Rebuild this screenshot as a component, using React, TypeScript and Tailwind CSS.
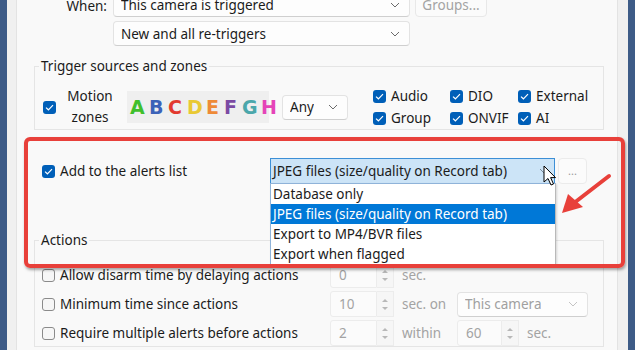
import React from "react";

const Check = ({ checked = false }: { checked?: boolean }) =>
  checked ? (
    <span className="flex h-[13px] w-[13px] shrink-0 items-center justify-center rounded-[3px] bg-[#005fb8]">
      <svg width="9" height="7" viewBox="0 0 9 7">
        <path d="M1 3.6 L3.4 5.8 L8 1.2" fill="none" stroke="white" strokeWidth="1.2" />
      </svg>
    </span>
  ) : (
    <span className="h-[13px] w-[13px] shrink-0 rounded-[3px] border border-[#8a8a8a] bg-[#f6f6f6]" />
  );

const Chevron = ({ color = "#6b6b6b" }: { color?: string }) => (
  <svg width="10" height="6" viewBox="0 0 10 6">
    <path d="M1 1 L5 5 L9 1" fill="none" stroke={color} strokeWidth="1" />
  </svg>
);

function Select({ text, w, disabled = false }: { text: string; w: string; disabled?: boolean }) {
  return (
    <div
      className={`flex h-[25px] ${w} shrink-0 items-center justify-between rounded-[4px] border border-[#e3e3e3] border-b-[#cfcfcf] bg-[#fdfdfd] pl-[7px] pr-[9px] ${
        disabled ? "text-[#a0a0a0]" : ""
      }`}
    >
      <span className="truncate">{text}</span>
      <Chevron color={disabled ? "#c4c4c4" : "#6b6b6b"} />
    </div>
  );
}

function Spin({ value, w }: { value: string; w: string }) {
  return (
    <div className="flex h-[26px] shrink-0">
      <div className={`flex ${w} items-center rounded-l-[3px] border border-[#ececec] bg-[#fbfbfb] pl-[8px] text-[#a3a3a3]`}>
        {value}
      </div>
      <div className="flex w-[17px] flex-col items-center justify-center gap-[5px] border border-l-0 border-[#ececec] bg-[#f6f6f6]">
        <span className="h-0 w-0 border-x-[3px] border-b-[3px] border-x-transparent border-b-[#b8b8b8]" />
        <span className="h-0 w-0 border-x-[3px] border-t-[3px] border-x-transparent border-t-[#b8b8b8]" />
      </div>
    </div>
  );
}

const letters = [
  ["A", "#3fbf2c"],
  ["B", "#3c62b8"],
  ["C", "#e2392f"],
  ["D", "#e9c934"],
  ["E", "#ee8a37"],
  ["F", "#7b4aa3"],
  ["G", "#4ba7ab"],
  ["H", "#e544b8"],
];

export default function App() {
  return (
    <div className="relative flex h-[350px] w-[635px] overflow-hidden bg-[#f9f9f9] font-['Noto_Sans','Open_Sans',sans-serif] text-[13.5px] leading-[20px] text-[#1b1b1b]">
      <div className="w-[7px] shrink-0 bg-[#3d5b87]" />
      <div className="w-[9px] shrink-0 bg-[#f0f0f0]" />

      {/* dialog panel */}
      <div className="w-[602px] shrink-0 border-x border-[#e3e3e3] bg-[#f9f9f9]">
        <div className="-mt-[8px] flex flex-col gap-[4px]">
          <div className="flex items-center">
            <span className="w-[90px] pt-[3px] text-right">When:</span>
            <div className="ml-[6px]">
              <Select text="This camera is triggered" w="w-[297px]" />
            </div>
            <div className="ml-[5px] flex h-[25px] w-[72px] items-center justify-center rounded-[4px] border border-[#e8e8e8] bg-[#fbfbfb] text-[#a3a3a3]">
              Groups...
            </div>
          </div>
          <div className="pl-[96px]">
            <Select text="New and all re-triggers" w="w-[297px]" />
          </div>
        </div>

        {/* Trigger sources */}
        <fieldset className="ml-[17px] mt-[10px] w-[570px] border border-[#e5e5e5]">
          <legend className="ml-[4px] px-[2px] leading-[20px]">Trigger sources and zones</legend>
          <div className="mt-[10px] flex items-center pb-[1px] pl-[8px]">
            <Check checked />
            <div className="ml-[6px] w-[56px] text-center leading-[21px]">
              Motion
              <br />
              zones
            </div>
            <div className="ml-[9px] flex h-[32px] w-[142px] items-center gap-[5px] bg-[#efefef] pl-[3px] font-['DejaVu_Sans',sans-serif] text-[19px] font-bold">
              {letters.map(([l, c]) => (
                <span key={l} className="w-[14px] text-center" style={{ color: c }}>
                  {l}
                </span>
              ))}
            </div>
            <div className="ml-[13px]">
              <Select text="Any" w="w-[66px]" />
            </div>
            <div className="ml-[25px] grid grid-cols-[77px_68px_70px] gap-y-[2px]">
              {["Audio", "DIO", "External", "Group", "ONVIF", "AI"].map((t) => (
                <div key={t} className="flex h-[20px] items-center gap-[5px]">
                  <Check checked />
                  <span>{t}</span>
                </div>
              ))}
            </div>
          </div>
        </fieldset>

        {/* Alerts list */}
        <div className="mt-[28px] flex items-center">
          <div className="flex w-[253px] items-center gap-[5px] pl-[25px]">
            <Check checked />
            <span>Add to the alerts list</span>
          </div>
          <div className="flex h-[26px] w-[285px] items-center justify-between border border-[#3c8fd6] bg-[#cce4f7] pl-[2px] pr-[5px]">
            <span>JPEG files (size/quality on Record tab)</span>
            <Chevron color="#7a8a99" />
          </div>
          <div className="ml-[3px] flex h-[26px] w-[29px] items-center justify-center rounded-[4px] border border-[#ebebeb] bg-[#fbfbfb] text-[11px] text-[#9a9a9a]">
            ...
          </div>
        </div>

        {/* Actions */}
        <fieldset className="ml-[17px] mt-[46px] w-[570px] border border-[#e5e5e5]">
          <legend className="ml-[4px] px-[2px] leading-[20px]">Actions</legend>
          <div className="mt-[12px] flex flex-col gap-[3px] pl-[7px]">
            <div className="flex items-center">
              <div className="flex w-[288px] items-center gap-[5px]">
                <Check />
                <span>Allow disarm time by delaying actions</span>
              </div>
              <Spin value="0" w="w-[47px]" />
              <span className="ml-[8px] text-[#a3a3a3]">sec.</span>
            </div>
            <div className="flex items-center">
              <div className="flex w-[288px] items-center gap-[5px]">
                <Check />
                <span>Minimum time since actions</span>
              </div>
              <Spin value="10" w="w-[47px]" />
              <span className="w-[63px] pl-[8px] text-[#a3a3a3]">sec. on</span>
              <Select text="This camera" w="w-[131px]" disabled />
            </div>
            <div className="flex items-center">
              <div className="flex w-[288px] items-center gap-[5px]">
                <Check />
                <span>Require multiple alerts before actions</span>
              </div>
              <Spin value="2" w="w-[47px]" />
              <span className="w-[63px] pl-[8px] text-[#a3a3a3]">within</span>
              <Spin value="60" w="w-[45px]" />
              <span className="ml-[8px] text-[#a3a3a3]">sec.</span>
            </div>
          </div>
        </fieldset>
      </div>

      <div className="w-[10px] shrink-0 bg-[#f0f0f0]" />
      <div className="flex-1 bg-[#3d5b87]" />

      {/* open dropdown list */}
      <div className="absolute left-[270px] top-[183px] flex w-[286px] flex-col border border-[#8fb3d9] border-r-[#b9b9b9] border-b-[#9fbfe0] bg-white shadow-[1px_1px_2px_rgba(0,0,0,0.15)]">
        <div className="h-[20px] pl-[2px]">Database only</div>
        <div className="h-[20px] bg-[#0078d7] pl-[2px] text-white">JPEG files (size/quality on Record tab)</div>
        <div className="h-[20px] pl-[2px]">Export to MP4/BVR files</div>
        <div className="h-[20px] pl-[2px]">Export when flagged</div>
      </div>

      {/* annotation box */}
      <div className="pointer-events-none absolute left-[24px] top-[137px] h-[131px] w-[601px] rounded-[6px] border-[4px] border-[#e8403a] shadow-[1px_2px_3px_rgba(0,0,0,0.35)]" />

      {/* annotation arrow */}
      <svg className="pointer-events-none absolute left-[555px] top-[170px]" width="60" height="50" viewBox="555 170 60 50">
        <line x1="609" y1="176" x2="574" y2="203" stroke="#e8403a" strokeWidth="4" strokeLinecap="round" />
        <polygon points="562,213 568,194 583,207" fill="#e8403a" />
      </svg>

      {/* mouse cursor */}
      <svg className="pointer-events-none absolute left-[543px] top-[165px]" width="14" height="22" viewBox="0 0 14 22">
        <path d="M1 1 L1 17 L5 13.5 L8 20 L10.5 19 L7.6 12.6 L12.5 12.6 Z" fill="white" stroke="black" strokeWidth="1" strokeLinejoin="round" />
      </svg>
    </div>
  );
}
